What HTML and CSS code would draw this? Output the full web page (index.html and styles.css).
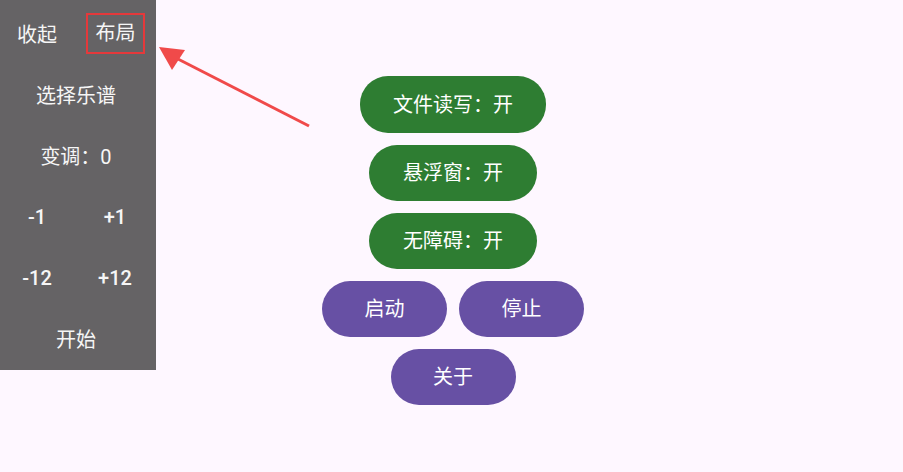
FILE: index.html
```html
<!DOCTYPE html>
<html lang="zh">
<head>
  <meta charset="UTF-8" />
  <title>乐谱播放器</title>
  <link rel="stylesheet" href="styles.css">
</head>
<body>
  <div class="main">
    <button class="btn green wide">文件读写：开</button>
    <button class="btn green">悬浮窗：开</button>
    <button class="btn green">无障碍：开</button>
    <div class="row">
      <button class="btn purple">启动</button>
      <button class="btn purple">停止</button>
    </div>
    <button class="btn purple">关于</button>
  </div>

  <div class="panel">
    <div class="cell">收起</div>
    <div class="cell"><span class="mark">布局</span></div>
    <div class="cell full">选择乐谱</div>
    <div class="cell full">变调：0</div>
    <div class="cell num">-1</div>
    <div class="cell num">+1</div>
    <div class="cell num">-12</div>
    <div class="cell num">+12</div>
    <div class="cell full">开始</div>
  </div>

  <svg class="arrow" width="320" height="140" viewBox="0 0 320 140">
    <line x1="309" y1="126" x2="176" y2="58" stroke="#f04a4a" stroke-width="3" />
    <polygon points="159,47 185,50 172,70" fill="#f04a4a" />
  </svg>
</body>
</html>
```

FILE: styles.css
```css
body {
  margin: 0;
  background: #fef7ff;
  font-family: Roboto, "Noto Sans CJK SC", sans-serif;
  width: 903px;
  height: 472px;
  overflow: hidden;
}
.main {
  display: flex;
  flex-direction: column;
  align-items: center;
  gap: 12px;
  padding-top: 76px;
  padding-left: 3px;
}
.row {
  display: flex;
  gap: 12px;
}
.btn {
  height: 56px;
  min-width: 125px;
  padding: 0 34px;
  border: none;
  border-radius: 28px;
  color: #fff;
  font-family: inherit;
  font-size: 20px;
  line-height: 24px;
}
.btn.wide {
  height: 57px;
  padding: 0 33px;
}
.green {
  background: #2e7d32;
}
.purple {
  background: #6750a4;
}
.panel {
  position: absolute;
  left: 0;
  top: 0;
  width: 156px;
  height: 366px;
  padding-top: 3px;
  padding-bottom: 1px;
  background: #656365;
  display: grid;
  grid-template-columns: 74px 74px;
  grid-auto-rows: 61px;
  column-gap: 4px;
  color: #f6f6f6;
  font-size: 20px;
}
.cell {
  display: flex;
  align-items: center;
  justify-content: center;
}
.full {
  grid-column: span 2;
}
.num {
  font-weight: 500;
}
.mark {
  padding: 7px 7px 7px 8px;
  line-height: 23px;
  border: 2px solid #e5393b;
}
.arrow {
  position: absolute;
  left: 0;
  top: 0;
}
```
